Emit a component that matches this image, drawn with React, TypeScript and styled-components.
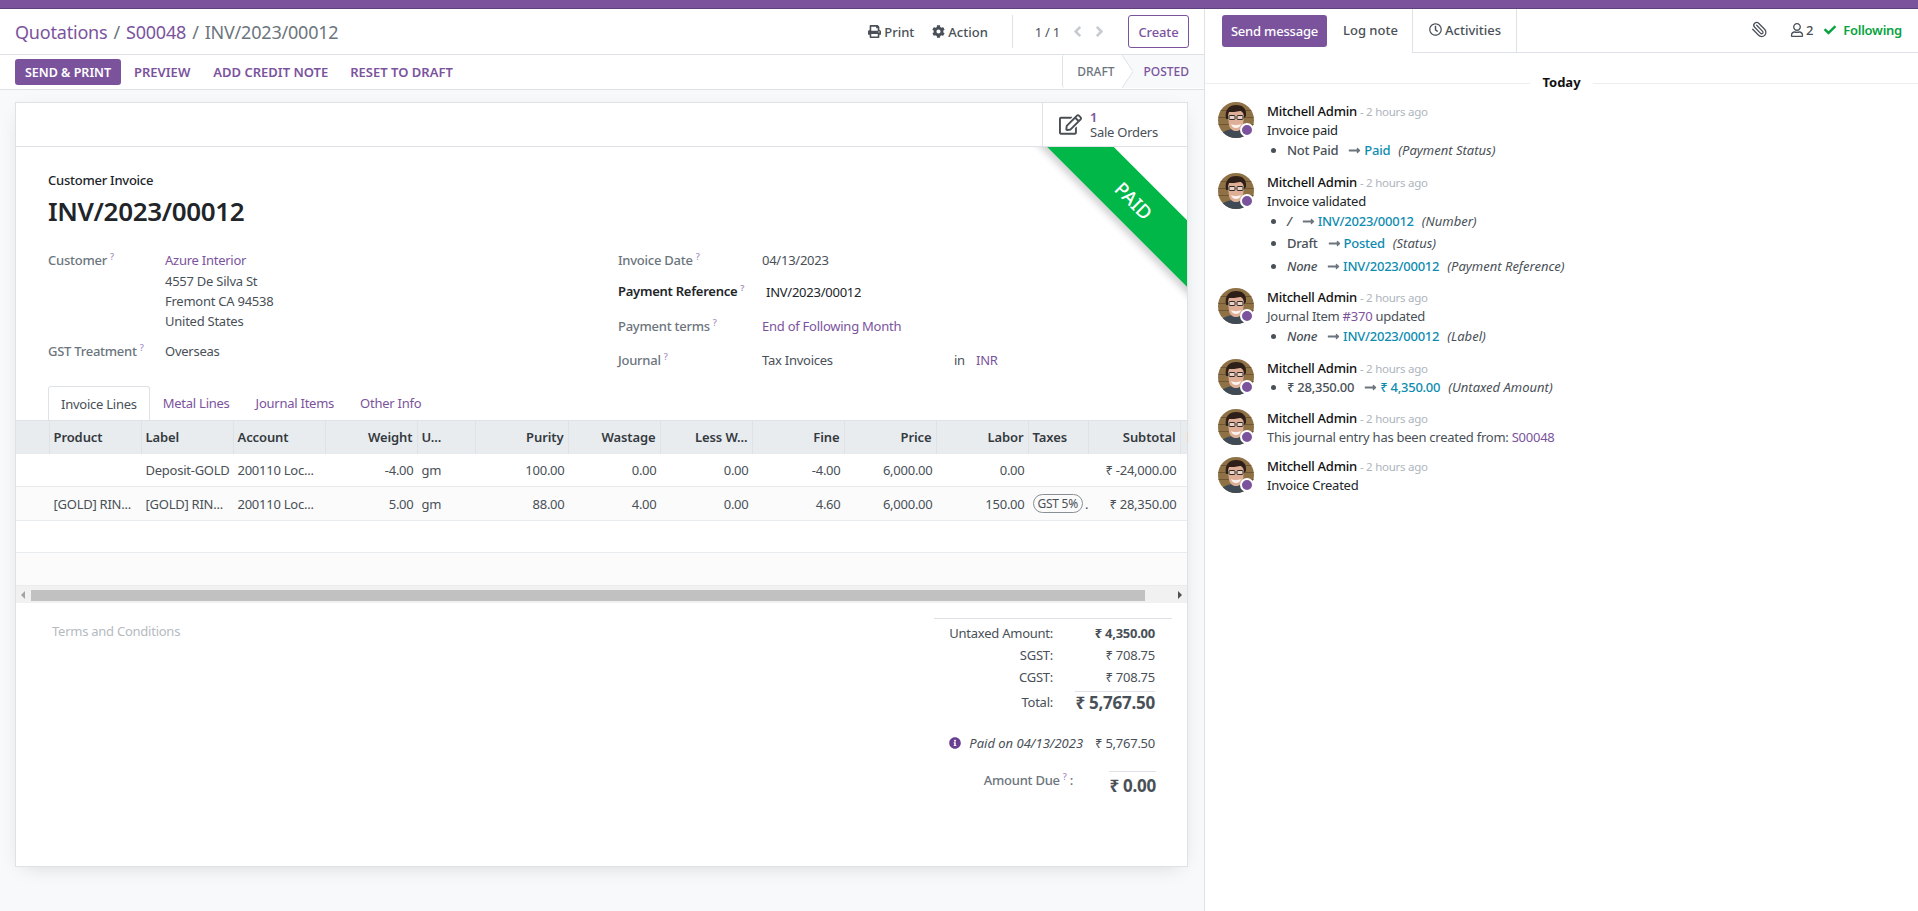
import React from 'react';
import styled, { createGlobalStyle } from 'styled-components';
import { Paperclip } from 'lucide-react';
import {
  FaAngleLeft,
  FaAngleRight,
  FaCheck,
  FaCog,
  FaInfoCircle,
  FaLongArrowAltRight,
  FaPrint,
  FaRegClock,
  FaRegEdit,
  FaRegUser,
} from 'react-icons/fa';

const PURPLE = '#7b539d';
const BORDER = '#dee2e6';
const TEAL = '#0d8cb0';

const GlobalStyle = createGlobalStyle`
  html, body {
    margin: 0;
    padding: 0;
    height: 100%;
    overflow: hidden;
    background: #fff;
  }
  body {
    font-family: "Noto Sans", "Open Sans", "DejaVu Sans", sans-serif;
    font-size: 13px;
    letter-spacing: -0.25px;
    color: #495057;
  }
  * {
    box-sizing: border-box;
  }
`;

const Page = styled.div`
  width: 1918px;
  height: 911px;
  display: flex;
  flex-direction: column;
  overflow: hidden;
`;

const TopBar = styled.div`
  height: 9px;
  flex: none;
  background: ${PURPLE};
  border-bottom: 1px solid #5f3f7c;
`;

const Columns = styled.div`
  flex: 1;
  display: flex;
  min-height: 0;
`;

const Main = styled.main`
  width: 1205px;
  flex: none;
  display: flex;
  flex-direction: column;
  background: #f8f9fa;
  border-right: 1px solid ${BORDER};
`;

const ControlPanel = styled.div`
  height: 46px;
  flex: none;
  background: #fff;
  border-bottom: 1px solid ${BORDER};
  display: flex;
  align-items: center;
  justify-content: space-between;
  padding: 0 15px 0 15px;
`;

const Breadcrumbs = styled.div`
  font-size: 18px;
  letter-spacing: -0.2px;
  color: #6c757d;
  display: flex;
  gap: 6px;
`;

const Crumb = styled.span`
  color: ${PURPLE};
`;

const PanelRight = styled.div`
  display: flex;
  align-items: center;
  height: 33px;
`;

const PanelAction = styled.span<{ $mr: number }>`
  display: inline-flex;
  align-items: center;
  gap: 3px;
  margin-right: ${(p) => p.$mr}px;
  font-weight: 500;
  color: #495057;
  letter-spacing: 0;
  svg {
    font-size: 13px;
  }
`;

const Pager = styled.div`
  height: 33px;
  margin-left: 4px;
  padding-left: 22px;
  border-left: 1px solid ${BORDER};
  display: flex;
  align-items: center;
  gap: 9px;
  margin-right: 20px;
  color: #495057;
  svg {
    color: #c6cbd0;
    font-size: 17px;
  }
`;

const PagerArrows = styled.span`
  display: inline-flex;
  gap: 5px;
`;

const CreateButton = styled.button`
  width: 61px;
  height: 33px;
  background: #fff;
  border: 1px solid ${PURPLE};
  border-radius: 3px;
  color: ${PURPLE};
  font: inherit;
  font-weight: 500;
  letter-spacing: -0.1px;
  padding: 0;
`;

const StatusRow = styled.div`
  height: 35px;
  flex: none;
  background: #fff;
  border-bottom: 1px solid ${BORDER};
  display: flex;
  align-items: center;
  padding-left: 15px;
`;

const PrimaryButton = styled.button`
  height: 26px;
  width: 106px;
  padding: 0;
  border: none;
  border-radius: 3px;
  background: ${PURPLE};
  color: #fff;
  font: inherit;
  font-size: 12.5px;
  font-weight: 600;
  letter-spacing: 0;
  text-transform: uppercase;
`;

const LinkButton = styled.span<{ $ml: number }>`
  margin-left: ${(p) => p.$ml}px;
  color: ${PURPLE};
  font-size: 13px;
  font-weight: 600;
  letter-spacing: 0;
  text-transform: uppercase;
`;

const StatusBar = styled.div`
  margin-left: auto;
  height: 33px;
  align-self: flex-start;
  display: flex;
  font-size: 12px;
  font-weight: 500;
  letter-spacing: 0;
  text-transform: uppercase;
`;

const StatusStep = styled.div<{ $active?: boolean }>`
  display: flex;
  align-items: center;
  color: ${(p) => (p.$active ? PURPLE : '#6c757d')};
  background: ${(p) => (p.$active ? '#f8f9fa' : '#fff')};
  padding: ${(p) => (p.$active ? '0 15px 0 10px' : '0 8px 0 14px')};
  border-left: ${(p) => (p.$active ? 'none' : `1px solid ${BORDER}`)};
  border-radius: ${(p) => (p.$active ? '0' : '3px 0 0 3px')};
`;

const Content = styled.div`
  flex: 1;
  min-height: 0;
  padding: 12px 16px 0 15px;
`;

const Sheet = styled.div`
  height: 765px;
  background: #fff;
  border: 1px solid ${BORDER};
  box-shadow: 0 5px 20px -8px rgba(0, 0, 0, 0.18);
  display: flex;
  flex-direction: column;
`;

const ButtonBox = styled.div`
  height: 44px;
  flex: none;
  display: flex;
  justify-content: flex-end;
  border-bottom: 1px solid ${BORDER};
`;

const StatButton = styled.div`
  width: 145px;
  display: flex;
  align-items: center;
  gap: 8px;
  padding-left: 16px;
  border-left: 1px solid ${BORDER};
  svg {
    font-size: 23px;
    color: #4a4f55;
  }
`;

const StatText = styled.div`
  line-height: 15px;
`;

const StatValue = styled.div`
  color: ${PURPLE};
  font-weight: 600;
`;

const SheetBody = styled.div`
  position: relative;
  flex: 1;
  min-height: 0;
  display: flex;
  flex-direction: column;
`;

const RibbonClip = styled.div`
  position: absolute;
  top: 0;
  right: 0;
  width: 160px;
  height: 160px;
  overflow: hidden;
  pointer-events: none;
`;

const Ribbon = styled.div`
  position: absolute;
  left: -43px;
  top: 30px;
  width: 300px;
  height: 47px;
  transform: rotate(45deg);
  background: #00b748;
  color: #fff;
  display: flex;
  align-items: center;
  justify-content: center;
  font-size: 19px;
  font-weight: 500;
  letter-spacing: 0;
  box-shadow: 0 5px 7px rgba(0, 0, 0, 0.18);
`;

const Heading = styled.div`
  padding: 24px 32px 0;
`;

const Kind = styled.div`
  line-height: 18px;
  font-weight: 500;
  color: #212529;
`;

const Title = styled.h1`
  margin: 5px 0 0;
  font-size: 26px;
  line-height: 34px;
  font-weight: 600;
  color: #212529;
  letter-spacing: -0.35px;
`;

const FormGroups = styled.div`
  display: grid;
  grid-template-columns: 570px 1fr;
  padding: 22px 32px 0;
`;

const FormRow = styled.div<{ $label: number; $mt?: number }>`
  display: grid;
  grid-template-columns: ${(p) => p.$label}px 1fr;
  line-height: 20px;
  margin-top: ${(p) => p.$mt ?? 0}px;
`;

const FormLabel = styled.div<{ $strong?: boolean }>`
  color: ${(p) => (p.$strong ? '#212529' : '#6c757d')};
  font-weight: ${(p) => (p.$strong ? 600 : 500)};
`;

const Help = styled.sup`
  font-size: 9px;
  line-height: 0;
  color: #a58bbd;
  margin-left: 3px;
`;

const LinkValue = styled.span`
  color: ${PURPLE};
`;

const Address = styled.div`
  margin-top: 1px;
`;

const DarkValue = styled.div`
  color: #212529;
  padding-left: 4px;
  margin-top: 1px;
`;

const JournalValue = styled.div`
  display: flex;
`;

const JournalName = styled.span`
  width: 192px;
`;

const JournalIn = styled.span`
  width: 22px;
`;

const Tabs = styled.div`
  display: flex;
  height: 34px;
  margin-top: 16px;
  padding-left: 32px;
  flex: none;
`;

const Tab = styled.div<{ $active?: boolean }>`
  height: 34px;
  display: flex;
  align-items: center;
  padding: 0 ${(p) => (p.$active ? 12 : 13)}px;
  color: ${(p) => (p.$active ? '#495057' : PURPLE)};
  background: #fff;
  position: relative;
  ${(p) =>
    p.$active
      ? `border: 1px solid ${BORDER}; border-bottom: none; border-radius: 3px 3px 0 0;`
      : ''}
`;

const COLUMNS = '33.5px 92px 92px 92px 92px 58.5px 92.5px 92px 92px 92px 92px 92px 60px 92px 7px';

const TableHead = styled.div`
  display: grid;
  grid-template-columns: ${COLUMNS};
  height: 34px;
  flex: none;
  background: #e9ecef;
  border-top: 1px solid ${BORDER};
  font-weight: 600;
  letter-spacing: -0.1px;
  color: #343a40;
`;

const HeadCell = styled.div<{ $right?: boolean }>`
  display: flex;
  align-items: center;
  justify-content: ${(p) => (p.$right ? 'flex-end' : 'flex-start')};
  padding: 0 4px 1px;
  border-right: 1px solid ${BORDER};
  white-space: nowrap;
  overflow: hidden;
`;

const OptionalMark = styled.div`
  justify-self: end;
  align-self: center;
  width: 1px;
  height: 9px;
  background: #f2d4b8;
`;

const TableRow = styled.div<{ $h: number; $striped?: boolean }>`
  display: grid;
  grid-template-columns: ${COLUMNS};
  height: ${(p) => p.$h}px;
  flex: none;
  background: ${(p) => (p.$striped ? '#fbfbfb' : '#fff')};
  border-bottom: 1px solid #e9ecef;
`;

const Cell = styled.div<{ $right?: boolean }>`
  display: flex;
  align-items: center;
  justify-content: ${(p) => (p.$right ? 'flex-end' : 'flex-start')};
  padding: 0 4px;
  white-space: nowrap;
  overflow: hidden;
`;

const TaxTag = styled.span`
  font-size: 12px;
  line-height: 17px;
  padding: 0 4px;
  border: 1px solid #8a8f94;
  border-radius: 10px;
  margin-right: 2px;
`;

const ScrollBar = styled.div`
  height: 17px;
  flex: none;
  background: #f1f1f1;
  display: flex;
  align-items: center;
  justify-content: space-between;
  padding: 0 5px;
`;

const ScrollArrow = styled.span<{ $right?: boolean }>`
  width: 0;
  height: 0;
  border-top: 4px solid transparent;
  border-bottom: 4px solid transparent;
  border-left: ${(p) => (p.$right ? '4px solid #505050' : 'none')};
  border-right: ${(p) => (p.$right ? 'none' : '4px solid #a3a3a3')};
`;

const ScrollThumb = styled.div`
  height: 11px;
  width: 1114px;
  margin: 2px auto 0 6px;
  background: #c1c1c1;
`;

const Footer = styled.div`
  display: flex;
  justify-content: space-between;
  padding: 15px 15px 0 36px;
`;

const Terms = styled.div`
  margin-top: 3px;
  line-height: 20px;
  color: #b5babf;
`;

const Totals = styled.div`
  width: 238px;
  border-top: 1px solid ${BORDER};
  padding-top: 3px;
`;

const TotalRow = styled.div<{ $mt?: number }>`
  display: grid;
  grid-template-columns: 119px 80px;
  column-gap: 22px;
  line-height: 22px;
  text-align: right;
  margin-top: ${(p) => p.$mt ?? 0}px;
`;

const TotalValue = styled.div<{ $bold?: boolean }>`
  font-weight: ${(p) => (p.$bold ? 700 : 400)};
  white-space: nowrap;
`;

const GrandValue = styled.div`
  border-top: 1px solid ${BORDER};
  font-size: 17px;
  font-weight: 700;
  white-space: nowrap;
`;

const PaidRow = styled.div`
  display: flex;
  align-items: center;
  justify-content: flex-end;
  line-height: 22px;
  margin-top: 18px;
  padding-right: 17px;
  white-space: nowrap;
  svg {
    color: #6a3f92;
    font-size: 12px;
    margin-right: 8px;
  }
`;

const PaidText = styled.em`
  margin-right: 12px;
  letter-spacing: 0;
`;

const DueRow = styled.div`
  display: flex;
  justify-content: flex-end;
  gap: 36px;
  padding-right: 16px;
  margin-top: 17px;
`;

const DueLabel = styled.div`
  line-height: 18px;
  font-weight: 500;
  color: #6c757d;
`;

const DueValue = styled.div`
  border-top: 1px solid ${BORDER};
  width: 47px;
  line-height: 27px;
  font-size: 17px;
  font-weight: 700;
  text-align: right;
  white-space: nowrap;
  display: flex;
  justify-content: flex-end;
`;

const Chatter = styled.aside`
  flex: 1;
  min-width: 0;
  display: flex;
  flex-direction: column;
  background: #fff;
`;

const ChatterBar = styled.div`
  height: 44px;
  flex: none;
  display: flex;
  padding-left: 17px;
`;

const SendButton = styled.button`
  width: 105px;
  height: 32px;
  margin-top: 6px;
  border: none;
  border-radius: 3px;
  background: ${PURPLE};
  color: #fff;
  font: inherit;
  font-weight: 500;
  letter-spacing: -0.2px;
  padding: 0;
`;

const ChatterTab = styled.div<{ $w: number; $line?: boolean }>`
  width: ${(p) => p.$w}px;
  display: flex;
  align-items: center;
  gap: 3px;
  padding: 0 0 2px 16px;
  border-right: 1px solid ${BORDER};
  border-bottom: ${(p) => (p.$line ? `1px solid ${BORDER}` : 'none')};
  font-weight: 500;
  letter-spacing: 0;
  color: #495057;
`;

const ChatterTools = styled.div`
  flex: 1;
  display: flex;
  align-items: center;
  justify-content: flex-end;
  padding: 0 16px 2px 0;
  border-bottom: 1px solid ${BORDER};
`;

const Clip = styled.span`
  display: inline-flex;
  margin-right: 22px;
  transform: scaleX(-1);
  color: #495057;
`;

const Followers = styled.span`
  display: inline-flex;
  align-items: center;
  gap: 2px;
  margin-right: 11px;
  font-weight: 500;
  svg {
    font-size: 14px;
  }
`;

const Following = styled.span`
  display: inline-flex;
  align-items: center;
  gap: 7px;
  color: #07a33f;
  font-weight: 600;
  svg {
    font-size: 12px;
  }
`;

const DateLine = styled.div`
  height: 20px;
  margin: 20px 0 9px;
  display: flex;
  align-items: center;
  flex: none;
  &::before,
  &::after {
    content: '';
    flex: 1;
    height: 1px;
    background: #eeeeee;
  }
`;

const DateText = styled.span`
  padding: 0 12px;
  font-weight: 700;
  letter-spacing: 0;
  color: #111;
  margin-top: -2px;
`;

const Message = styled.div`
  display: flex;
  gap: 13px;
  padding: 0 0 9px 13px;
`;

const AvatarWrap = styled.div`
  position: relative;
  width: 36px;
  height: 36px;
  flex: none;
`;

const AvatarImage = styled.svg`
  display: block;
  border-radius: 50%;
`;

const PresenceDot = styled.span`
  position: absolute;
  left: 22px;
  top: 21px;
  width: 14px;
  height: 14px;
  border-radius: 50%;
  background: ${PURPLE};
  border: 2px solid #fff;
`;

const MessageBody = styled.div`
  min-width: 0;
  margin-top: -1px;
`;

const MessageHead = styled.div`
  height: 20px;
  line-height: 20px;
  color: #111;
  font-weight: 500;
`;

const TimeStamp = styled.span`
  font-size: 11.5px;
  font-weight: 400;
  color: #adb5bd;
  margin-left: 3px;
`;

const MessageText = styled.div<{ $dark?: boolean }>`
  height: 20px;
  line-height: 20px;
  margin-top: -1px;
  margin-bottom: 1px;
  color: ${(p) => (p.$dark ? '#212529' : '#495057')};
`;

const Changes = styled.ul`
  margin: 0;
  padding: 0 0 0 20px;
`;

const Change = styled.li`
  height: 18px;
  line-height: 18px;
  margin-bottom: 4.5px;
  white-space: nowrap;
`;

const OldValue = styled.span<{ $italic?: boolean }>`
  font-weight: 500;
  font-style: ${(p) => (p.$italic ? 'italic' : 'normal')};
`;

const Arrow = styled(FaLongArrowAltRight)`
  color: #6c757d;
  font-size: 13px;
  margin: 0 3px 0 10px;
  vertical-align: -2px;
`;

const NewValue = styled.span`
  color: ${TEAL};
  font-weight: 500;
`;

const FieldName = styled.em`
  margin-left: 8px;
  letter-spacing: 0;
`;

function Avatar() {
  return (
    <AvatarWrap>
      <AvatarImage width="36" height="36" viewBox="0 0 36 36">
        <rect width="36" height="36" fill="#8f7146" />
        <rect x="0" y="8" width="36" height="1" fill="#6f5532" />
        <rect x="0" y="15" width="36" height="1" fill="#6f5532" />
        <rect x="0" y="22" width="36" height="1" fill="#6f5532" />
        <path d="M2 36c1-7 8-9 16-9s15 2 16 9z" fill="#3f4a55" />
        <path d="M10 14c0-6 3-9 8-9s8 3 8 9l-1 9c-1 4-4 6-7 6s-6-2-7-6z" fill="#dfae96" />
        <path d="M8 17C6 7 12 3 18 3s11 3 10 11l-2 2c0-5-2-7-4-7-4 1-8 1-11 1-1 2-1 5-1 7z" fill="#2e1f18" />
        <rect x="11" y="13.5" width="6" height="4" rx="1" fill="#ecd2c4" stroke="#2b2b2b" />
        <rect x="19" y="13.5" width="6" height="4" rx="1" fill="#ecd2c4" stroke="#2b2b2b" />
        <path d="M13 22c2 1.5 7 1.5 10 0-1 3-3 4-5 4s-4-1-5-4z" fill="#fbf4ef" />
      </AvatarImage>
      <PresenceDot />
    </AvatarWrap>
  );
}

function Head() {
  return (
    <MessageHead>
      Mitchell Admin<TimeStamp>- 2 hours ago</TimeStamp>
    </MessageHead>
  );
}

function Tracked(props: { from: string; to: string; field: string; italic?: boolean }) {
  return (
    <Change>
      <OldValue $italic={props.italic}>{props.from}</OldValue>
      <Arrow />
      <NewValue>{props.to}</NewValue>
      <FieldName>({props.field})</FieldName>
    </Change>
  );
}

export default function App() {
  return (
    <Page>
      <GlobalStyle />
      <TopBar />
      <Columns>
        <Main>
          <ControlPanel>
            <Breadcrumbs>
              <Crumb>Quotations</Crumb>
              <span>/</span>
              <Crumb>S00048</Crumb>
              <span>/</span>
              <span>INV/2023/00012</span>
            </Breadcrumbs>
            <PanelRight>
              <PanelAction $mr={18}>
                <FaPrint />
                Print
              </PanelAction>
              <PanelAction $mr={20}>
                <FaCog />
                Action
              </PanelAction>
              <Pager>
                1 / 1
                <PagerArrows>
                  <FaAngleLeft />
                  <FaAngleRight />
                </PagerArrows>
              </Pager>
              <CreateButton>Create</CreateButton>
            </PanelRight>
          </ControlPanel>
          <StatusRow>
            <PrimaryButton>Send &amp; Print</PrimaryButton>
            <LinkButton $ml={13}>Preview</LinkButton>
            <LinkButton $ml={23}>Add Credit Note</LinkButton>
            <LinkButton $ml={22}>Reset to Draft</LinkButton>
            <StatusBar>
              <StatusStep>Draft</StatusStep>
              <svg width="11" height="33" viewBox="0 0 11 33">
                <path d="M0 0L11 16.5L0 33L11 33L11 0Z" fill="#f8f9fa" />
                <path d="M0 0L11 16.5L0 33" fill="none" stroke={BORDER} />
              </svg>
              <StatusStep $active>Posted</StatusStep>
            </StatusBar>
          </StatusRow>
          <Content>
            <Sheet>
              <ButtonBox>
                <StatButton>
                  <FaRegEdit />
                  <StatText>
                    <StatValue>1</StatValue>
                    Sale Orders
                  </StatText>
                </StatButton>
              </ButtonBox>
              <SheetBody>
                <RibbonClip>
                  <Ribbon>PAID</Ribbon>
                </RibbonClip>
                <Heading>
                  <Kind>Customer Invoice</Kind>
                  <Title>INV/2023/00012</Title>
                </Heading>
                <FormGroups>
                  <div>
                    <FormRow $label={117}>
                      <FormLabel>
                        Customer<Help>?</Help>
                      </FormLabel>
                      <div>
                        <LinkValue>Azure Interior</LinkValue>
                        <Address>
                          4557 De Silva St
                          <br />
                          Fremont CA 94538
                          <br />
                          United States
                        </Address>
                      </div>
                    </FormRow>
                    <FormRow $label={117} $mt={10}>
                      <FormLabel>
                        GST Treatment<Help>?</Help>
                      </FormLabel>
                      <div>Overseas</div>
                    </FormRow>
                  </div>
                  <div>
                    <FormRow $label={144}>
                      <FormLabel>
                        Invoice Date<Help>?</Help>
                      </FormLabel>
                      <div>04/13/2023</div>
                    </FormRow>
                    <FormRow $label={144} $mt={11}>
                      <FormLabel $strong>
                        Payment Reference<Help>?</Help>
                      </FormLabel>
                      <DarkValue>INV/2023/00012</DarkValue>
                    </FormRow>
                    <FormRow $label={144} $mt={14}>
                      <FormLabel>
                        Payment terms<Help>?</Help>
                      </FormLabel>
                      <LinkValue>End of Following Month</LinkValue>
                    </FormRow>
                    <FormRow $label={144} $mt={14}>
                      <FormLabel>
                        Journal<Help>?</Help>
                      </FormLabel>
                      <JournalValue>
                        <JournalName>Tax Invoices</JournalName>
                        <JournalIn>in</JournalIn>
                        <LinkValue>INR</LinkValue>
                      </JournalValue>
                    </FormRow>
                  </div>
                </FormGroups>
                <Tabs>
                  <Tab $active>Invoice Lines</Tab>
                  <Tab>Metal Lines</Tab>
                  <Tab>Journal Items</Tab>
                  <Tab>Other Info</Tab>
                </Tabs>
                <TableHead>
                  <HeadCell />
                  <HeadCell>Product</HeadCell>
                  <HeadCell>Label</HeadCell>
                  <HeadCell>Account</HeadCell>
                  <HeadCell $right>Weight</HeadCell>
                  <HeadCell>U...</HeadCell>
                  <HeadCell $right>Purity</HeadCell>
                  <HeadCell $right>Wastage</HeadCell>
                  <HeadCell $right>Less W...</HeadCell>
                  <HeadCell $right>Fine</HeadCell>
                  <HeadCell $right>Price</HeadCell>
                  <HeadCell $right>Labor</HeadCell>
                  <HeadCell>Taxes</HeadCell>
                  <HeadCell $right>Subtotal</HeadCell>
                  <OptionalMark />
                </TableHead>
                <TableRow $h={33}>
                  <Cell />
                  <Cell />
                  <Cell>Deposit-GOLD</Cell>
                  <Cell>200110 Loc...</Cell>
                  <Cell $right>-4.00</Cell>
                  <Cell>gm</Cell>
                  <Cell $right>100.00</Cell>
                  <Cell $right>0.00</Cell>
                  <Cell $right>0.00</Cell>
                  <Cell $right>-4.00</Cell>
                  <Cell $right>6,000.00</Cell>
                  <Cell $right>0.00</Cell>
                  <Cell />
                  <Cell $right>₹ -24,000.00</Cell>
                </TableRow>
                <TableRow $h={34} $striped>
                  <Cell />
                  <Cell>[GOLD] RIN...</Cell>
                  <Cell>[GOLD] RIN...</Cell>
                  <Cell>200110 Loc...</Cell>
                  <Cell $right>5.00</Cell>
                  <Cell>gm</Cell>
                  <Cell $right>88.00</Cell>
                  <Cell $right>4.00</Cell>
                  <Cell $right>0.00</Cell>
                  <Cell $right>4.60</Cell>
                  <Cell $right>6,000.00</Cell>
                  <Cell $right>150.00</Cell>
                  <Cell>
                    <TaxTag>GST 5%</TaxTag>.
                  </Cell>
                  <Cell $right>₹ 28,350.00</Cell>
                </TableRow>
                <TableRow $h={32} />
                <TableRow $h={33} $striped />
                <ScrollBar>
                  <ScrollArrow />
                  <ScrollThumb />
                  <ScrollArrow $right />
                </ScrollBar>
                <Footer>
                  <Terms>Terms and Conditions</Terms>
                  <Totals>
                    <TotalRow>
                      <div>Untaxed Amount:</div>
                      <TotalValue $bold>₹ 4,350.00</TotalValue>
                    </TotalRow>
                    <TotalRow>
                      <div>SGST:</div>
                      <TotalValue>₹ 708.75</TotalValue>
                    </TotalRow>
                    <TotalRow>
                      <div>CGST:</div>
                      <TotalValue>₹ 708.75</TotalValue>
                    </TotalRow>
                    <TotalRow $mt={3}>
                      <div>Total:</div>
                      <GrandValue>₹ 5,767.50</GrandValue>
                    </TotalRow>
                    <PaidRow>
                      <FaInfoCircle />
                      <PaidText>Paid on 04/13/2023</PaidText>
                      <span>₹ 5,767.50</span>
                    </PaidRow>
                    <DueRow>
                      <DueLabel>
                        Amount Due<Help>?</Help> :
                      </DueLabel>
                      <DueValue>₹ 0.00</DueValue>
                    </DueRow>
                  </Totals>
                </Footer>
              </SheetBody>
            </Sheet>
          </Content>
        </Main>
        <Chatter>
          <ChatterBar>
            <SendButton>Send message</SendButton>
            <ChatterTab $w={86}>Log note</ChatterTab>
            <ChatterTab $w={104} $line>
              <FaRegClock />
              Activities
            </ChatterTab>
            <ChatterTools>
              <Clip>
                <Paperclip size={17} strokeWidth={1.8} />
              </Clip>
              <Followers>
                <FaRegUser />2
              </Followers>
              <Following>
                <FaCheck />
                Following
              </Following>
            </ChatterTools>
          </ChatterBar>
          <DateLine>
            <DateText>Today</DateText>
          </DateLine>
          <Message>
            <Avatar />
            <MessageBody>
              <Head />
              <MessageText $dark>Invoice paid</MessageText>
              <Changes>
                <Tracked from="Not Paid" to="Paid" field="Payment Status" />
              </Changes>
            </MessageBody>
          </Message>
          <Message>
            <Avatar />
            <MessageBody>
              <Head />
              <MessageText $dark>Invoice validated</MessageText>
              <Changes>
                <Tracked from="/" to="INV/2023/00012" field="Number" italic />
                <Tracked from="Draft" to="Posted" field="Status" />
                <Tracked from="None" to="INV/2023/00012" field="Payment Reference" italic />
              </Changes>
            </MessageBody>
          </Message>
          <Message>
            <Avatar />
            <MessageBody>
              <Head />
              <MessageText>
                Journal Item <LinkValue>#370</LinkValue> updated
              </MessageText>
              <Changes>
                <Tracked from="None" to="INV/2023/00012" field="Label" italic />
              </Changes>
            </MessageBody>
          </Message>
          <Message>
            <Avatar />
            <MessageBody>
              <Head />
              <Changes>
                <Tracked from="₹ 28,350.00" to="₹ 4,350.00" field="Untaxed Amount" />
              </Changes>
            </MessageBody>
          </Message>
          <Message>
            <Avatar />
            <MessageBody>
              <Head />
              <MessageText>
                This journal entry has been created from: <LinkValue>S00048</LinkValue>
              </MessageText>
            </MessageBody>
          </Message>
          <Message>
            <Avatar />
            <MessageBody>
              <Head />
              <MessageText $dark>Invoice Created</MessageText>
            </MessageBody>
          </Message>
        </Chatter>
      </Columns>
    </Page>
  );
}
